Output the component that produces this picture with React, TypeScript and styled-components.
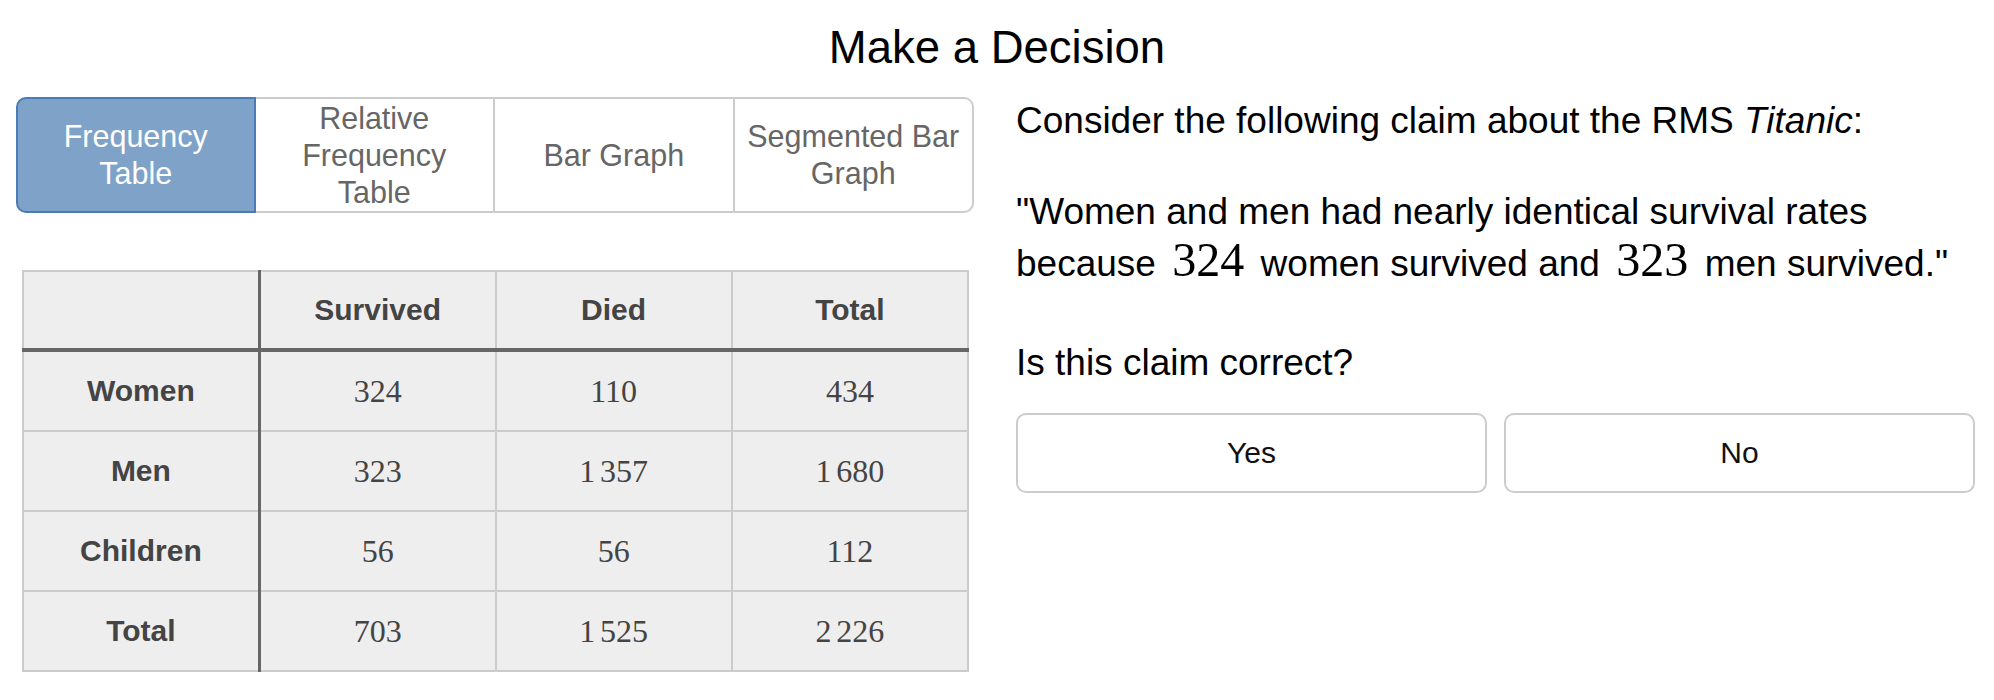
import React from "react";
import styled, { createGlobalStyle } from "styled-components";

const GlobalStyle = createGlobalStyle`
  html, body {
    margin: 0;
    padding: 0;
    background: #ffffff;
  }
  body {
    font-family: "Liberation Sans", Arial, Helvetica, sans-serif;
    color: #000;
  }
`;

const Page = styled.div`
  width: 1994px;
  padding: 25px 0 0 16px;
  box-sizing: border-box;
`;

const Title = styled.h1`
  margin: 0 0 0 -16px;
  font-size: 45.5px;
  line-height: 45px;
  font-weight: 400;
  text-align: center;
  color: #000;
`;

const Columns = styled.div`
  display: grid;
  grid-template-columns: 958px 959px;
  column-gap: 42px;
  margin-top: 27px;
  align-items: start;
`;

const LeftColumn = styled.div`
  display: flex;
  flex-direction: column;
`;

const Tabs = styled.div`
  display: grid;
  grid-template-columns: repeat(4, 1fr);
`;

const Tab = styled.div<{ $active?: boolean; $first?: boolean; $last?: boolean }>`
  display: flex;
  align-items: center;
  justify-content: center;
  text-align: center;
  box-sizing: border-box;
  height: 116px;
  padding: 0 4px;
  font-size: 30.5px;
  line-height: 37px;
  color: ${(p) => (p.$active ? "#ffffff" : "#666666")};
  background: ${(p) => (p.$active ? "#7fa2c8" : "#ffffff")};
  border-style: solid;
  border-color: ${(p) => (p.$active ? "#4b7bb6" : "#cccccc")};
  border-width: 2px 2px 2px ${(p) => (p.$first ? "2px" : "0")};
  border-radius: ${(p) =>
    p.$first ? "10px 0 0 10px" : p.$last ? "0 10px 10px 0" : "0"};
`;

const TableWrap = styled.div`
  margin: 57px 5px 0 6px;
`;

const DataTable = styled.table`
  width: 947px;
  border-collapse: collapse;
  table-layout: fixed;
`;

const HeadCell = styled.th<{ $corner?: boolean }>`
  height: 76px;
  padding: 0;
  background: #eeeeee;
  border: 2px solid #cccccc;
  border-bottom: 4px solid #666666;
  ${(p) => (p.$corner ? "border-right: 3px solid #666666;" : "")}
  font-size: 30px;
  font-weight: 700;
  color: #444444;
  text-align: center;
  vertical-align: middle;
`;

const RowHead = styled.th`
  height: 78px;
  padding: 0;
  background: #eeeeee;
  border: 2px solid #cccccc;
  border-right: 3px solid #666666;
  font-size: 30px;
  font-weight: 700;
  color: #444444;
  text-align: center;
  vertical-align: middle;
`;

const NumCell = styled.td`
  height: 78px;
  padding: 0;
  background: #eeeeee;
  border: 2px solid #cccccc;
  font-family: "Liberation Serif", "Times New Roman", serif;
  font-size: 32px;
  color: #444444;
  text-align: center;
  vertical-align: middle;
`;

const Group = styled.span`
  margin-left: 0.15em;
`;

const RightColumn = styled.div`
  display: flex;
  flex-direction: column;
`;

const Para = styled.p<{ $gap?: number }>`
  margin: ${(p) => p.$gap ?? 0}px 0 0 0;
  font-size: 37px;
  line-height: 48px;
  color: #000;
`;

const Math = styled.span`
  font-family: "Liberation Serif", "Times New Roman", serif;
  font-size: 1.3em;
  line-height: 1;
  margin: 0 6px;
`;

const Buttons = styled.div`
  display: grid;
  grid-template-columns: 1fr 1fr;
  column-gap: 17px;
  margin-top: 26px;
`;

const ChoiceButton = styled.button`
  height: 80px;
  box-sizing: border-box;
  background: #ffffff;
  border: 2px solid #cccccc;
  border-radius: 10px;
  font-family: "Liberation Sans", Arial, Helvetica, sans-serif;
  font-size: 30px;
  color: #111111;
  cursor: pointer;
  padding: 0;
`;

const tabs = [
  { label: ["Frequency", "Table"], active: true },
  { label: ["Relative", "Frequency", "Table"] },
  { label: ["Bar Graph"] },
  { label: ["Segmented Bar", "Graph"] },
];

const rows = [
  { name: "Women", values: [["324"], ["110"], ["434"]] },
  { name: "Men", values: [["323"], ["1", "357"], ["1", "680"]] },
  { name: "Children", values: [["56"], ["56"], ["112"]] },
  { name: "Total", values: [["703"], ["1", "525"], ["2", "226"]] },
];

export default function App() {
  return (
    <>
      <GlobalStyle />
      <Page>
        <Title>Make a Decision</Title>
        <Columns>
          <LeftColumn>
            <Tabs>
              {tabs.map((t, i) => (
                <Tab
                  key={i}
                  $active={t.active}
                  $first={i === 0}
                  $last={i === tabs.length - 1}
                >
                  <span>
                    {t.label.map((l, j) => (
                      <React.Fragment key={j}>
                        {j > 0 && <br />}
                        {l}
                      </React.Fragment>
                    ))}
                  </span>
                </Tab>
              ))}
            </Tabs>
            <TableWrap>
              <DataTable>
                <thead>
                  <tr>
                    <HeadCell $corner />
                    <HeadCell>Survived</HeadCell>
                    <HeadCell>Died</HeadCell>
                    <HeadCell>Total</HeadCell>
                  </tr>
                </thead>
                <tbody>
                  {rows.map((r) => (
                    <tr key={r.name}>
                      <RowHead>{r.name}</RowHead>
                      {r.values.map((v, k) => (
                        <NumCell key={k}>
                          {v[0]}
                          {v[1] && <Group>{v[1]}</Group>}
                        </NumCell>
                      ))}
                    </tr>
                  ))}
                </tbody>
              </DataTable>
            </TableWrap>
          </LeftColumn>
          <RightColumn>
            <Para>
              Consider the following claim about the RMS <i>Titanic</i>:
            </Para>
            <Para $gap={43}>
              "Women and men had nearly identical survival rates because{" "}
              <Math>324</Math> women survived and <Math>323</Math> men
              survived."
            </Para>
            <Para $gap={51}>Is this claim correct?</Para>
            <Buttons>
              <ChoiceButton>Yes</ChoiceButton>
              <ChoiceButton>No</ChoiceButton>
            </Buttons>
          </RightColumn>
        </Columns>
      </Page>
    </>
  );
}
